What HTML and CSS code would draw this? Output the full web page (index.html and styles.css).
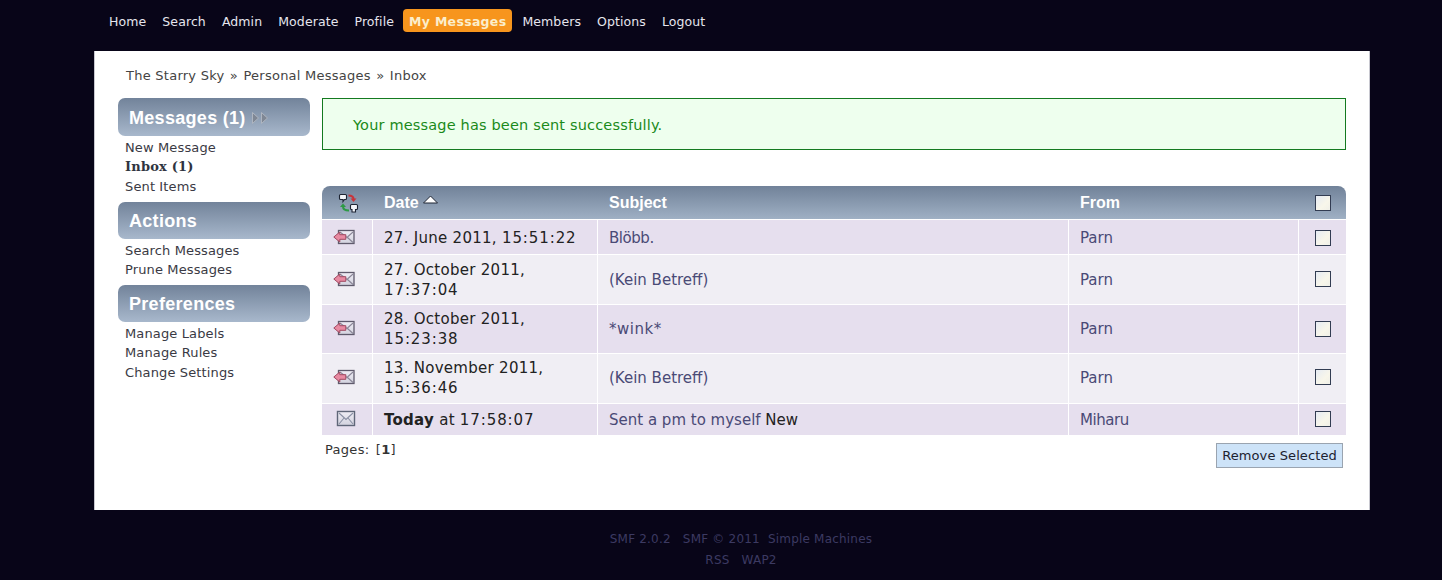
FILE: index.html
```html
<!DOCTYPE html>
<html lang="en">
<head>
<meta charset="utf-8">
<title>Personal Messages - Inbox</title>
<link rel="stylesheet" href="styles.css">
</head>
<body>
<nav class="topnav">
  <a>Home</a><a>Search</a><a>Admin</a><a>Moderate</a><a>Profile</a><a class="active">My Messages</a><a>Members</a><a>Options</a><a>Logout</a>
</nav>
<main class="wrapper">
  <div class="crumbs"><a>The Starry Sky</a> <span class="sep">»</span> <a>Personal Messages</a> <span class="sep">»</span> <a>Inbox</a></div>
  <div class="columns">
    <aside class="side">
      <h3 class="sidehead sidehead-first">Messages (1) <svg class="arrows" width="18" height="14" viewBox="0 0 18 14"><path d="M1.500 1.500l6 5.500-6 5.500z M10.500 1.500l6 5.500-6 5.500z" fill="#7f8794" stroke="#aeb5c0"/></svg></h3>
      <ul class="sidelist">
        <li>New Message</li>
        <li class="current">Inbox (1)</li>
        <li>Sent Items</li>
      </ul>
      <h3 class="sidehead">Actions</h3>
      <ul class="sidelist">
        <li>Search Messages</li>
        <li>Prune Messages</li>
      </ul>
      <h3 class="sidehead">Preferences</h3>
      <ul class="sidelist">
        <li>Manage Labels</li>
        <li>Manage Rules</li>
        <li>Change Settings</li>
      </ul>
    </aside>
    <section class="content">
      <div class="notice">Your message has been sent successfully.</div>
      <table class="inbox">
        <colgroup><col class="c1"><col class="c2"><col class="c3"><col class="c4"><col class="c5"></colgroup>
        <thead>
          <tr>
            <th class="ic"><svg class="swap" width="21" height="21" viewBox="0 0 21 21"><path d="M1.500 2.500a1 1 0 0 1 1-1h5a1 1 0 0 1 1 1v3a1 1 0 0 1-1 1h-1l-1.500 2v-2h-2.500a1 1 0 0 1-1-1z" fill="#f4f6fa" stroke="#1d2433" stroke-width="1.100"/><path d="M12.500 12.500a1 1 0 0 1 1-1h5a1 1 0 0 1 1 1v3a1 1 0 0 1-1 1h-1v2.500h-3.500v-2.500h-.500a1 1 0 0 1-1-1z" fill="#f4f6fa" stroke="#1d2433" stroke-width="1.100"/><path d="M10.500 2.500c3 0 5 .5 5 3.500" fill="none" stroke="#c8333a" stroke-width="2"/><path d="M12.500 5.500h6l-3 3.500z" fill="#c8333a"/><path d="M11 17.500c-3 0-6-.5-6-4" fill="none" stroke="#2d9a45" stroke-width="2"/><path d="M2 14h6l-3-3.500z" fill="#2d9a45"/></svg></th>
            <th>Date <svg class="sort" width="17" height="10" viewBox="0 0 17 10"><path d="M8.500 1l7 7h-14z" fill="#fff" stroke="#1d2433"/></svg></th>
            <th>Subject</th>
            <th>From</th>
            <th class="ck"><span class="box"></span></th>
          </tr>
        </thead>
        <tbody>
          <tr class="odd r1"><td class="ic"><svg class="mail" width="22" height="16" viewBox="0 0 22 16"><use href="#replied"/></svg></td><td class="date">27. June 2011, <span class="time">15:51:22</span></td><td class="link tight">Blöbb.</td><td class="link">Parn</td><td class="ck"><span class="box"></span></td></tr>
          <tr class="even r2"><td class="ic"><svg class="mail" width="22" height="16" viewBox="0 0 22 16"><use href="#replied"/></svg></td><td class="date">27. October 2011,<br><span class="time">17:37:04</span></td><td class="link">(Kein Betreff)</td><td class="link">Parn</td><td class="ck"><span class="box"></span></td></tr>
          <tr class="odd r3"><td class="ic"><svg class="mail" width="22" height="16" viewBox="0 0 22 16"><use href="#replied"/></svg></td><td class="date">28. October 2011,<br><span class="time">15:23:38</span></td><td class="link wide">*wink*</td><td class="link">Parn</td><td class="ck"><span class="box"></span></td></tr>
          <tr class="even r4"><td class="ic"><svg class="mail" width="22" height="16" viewBox="0 0 22 16"><use href="#replied"/></svg></td><td class="date">13. November 2011,<br><span class="time">15:36:46</span></td><td class="link">(Kein Betreff)</td><td class="link">Parn</td><td class="ck"><span class="box"></span></td></tr>
          <tr class="odd r5"><td class="ic"><svg class="mail plain" width="20" height="17" viewBox="0 0 20 17"><use href="#plain"/></svg></td><td class="date"><b>Today</b> at <span class="time">17:58:07</span></td><td class="link">Sent a pm to myself <span class="new">New</span></td><td class="link tight">Miharu</td><td class="ck"><span class="box"></span></td></tr>
        </tbody>
      </table>
      <div class="under">
        <div class="pages">Pages: [<b>1</b>]</div>
        <button class="remove" type="button">Remove Selected</button>
      </div>
    </section>
  </div>
</main>
<footer class="foot">
  <div>SMF 2.0.2 &nbsp; SMF © 2011 &nbsp;Simple Machines</div>
  <div>RSS &nbsp; WAP2</div>
</footer>
<svg class="defs" width="0" height="0"><defs>
  <linearGradient id="env" x1="0" y1="0" x2="0" y2="1"><stop offset="0" stop-color="#f0eef5"/><stop offset="1" stop-color="#d2d2de"/></linearGradient>
  <g id="replied"><rect x="5.500" y="1.500" width="15.500" height="13" fill="url(#env)" stroke="#5f5a6c" stroke-width="1.300"/><path d="M7 3l7 5.500L20 3M20 13.500l-5.500-5" fill="none" stroke="#8a8698" stroke-width="1.100"/><path d="M.8 8l6-5v2.700h6v4.600h-6V13z" fill="#e88aa2" stroke="#a04860"/></g>
  <g id="plain"><rect x="1.500" y="1.500" width="17" height="14" fill="url(#env)" stroke="#5f6678" stroke-width="1.400"/><path d="M3 3l7 6.500L17 3M3 14l5-6M17 14l-5-6" fill="none" stroke="#8a90a4" stroke-width="1.100"/></g>
</defs></svg>
</body>
</html>
```
FILE: styles.css
```css
* { box-sizing: border-box; }
html, body { margin: 0; padding: 0; }
body {
  background: #080518;
  font-family: "DejaVu Sans", Verdana, sans-serif;
  font-size: 13px;
  color: #333;
  height: 580px;
  overflow: hidden;
}
.topnav {
  height: 51px;
  padding: 9px 0 0 101px;
  display: flex;
  align-items: flex-start;
  font-size: 12.500px;
  letter-spacing: .1px;
  color: #e6e6ee;
}
.topnav a { padding: 1px 8px 0; line-height: 23px; }
.topnav a.active {
  background: #f7951d;
  color: #fbeecb;
  font-weight: bold;
  letter-spacing: .3px;
  border-radius: 4px;
  padding: 1px 6px 0;
  margin: 0 2px 0 1px;
  height: 23px;
  line-height: 23px;
}
.wrapper {
  margin: 0 72px 0 94px;
  height: 459px;
  background: #fff;
  border-left: 1px solid #c8c8d0;
  border-right: 1px solid #c8c8d0;
  padding: 0 23px 0 23px;
}
.crumbs { height: 47px; padding: 16px 0 0 8px; line-height: 18px; letter-spacing: .25px; color: #444; }
.sep { padding: 0 1px; }
.columns { display: flex; gap: 12px; align-items: flex-start; }
.side { width: 192px; flex: none; }
.sidehead {
  margin: 0;
  height: 37px;
  padding: 1px 0 0 11px;
  font: bold 18px/36px "Liberation Sans", Arial, sans-serif;
  letter-spacing: .3px;
  color: #fff;
  background: linear-gradient(#72839a, #a8b8cc);
  border-radius: 7px;
  display: flex;
  align-items: center;
  gap: 5px;
}
.sidehead-first { height: 38px; }
.sidelist { list-style: none; margin: 0; padding: 2px 0 5px 7px; line-height: 19.500px; letter-spacing: .13px; color: #3a3a44; }
.sidelist .current { font-family: "DejaVu Serif", serif; font-weight: bold; color: #2f3440; letter-spacing: .2px; margin: -1px 0 1px; }
.content { width: 1024px; flex: none; }
.notice {
  height: 52px;
  border: 1px solid #147a20;
  background: #eeffee;
  color: #1a8a1a;
  font-size: 14.500px;
  letter-spacing: .17px;
  line-height: 52px;
  padding-left: 30px;
}
.inbox {
  margin-top: 36px;
  width: 1024px;
  table-layout: fixed;
  border-collapse: separate;
  border-spacing: 0;
  font-size: 15px;
  color: #222;
}
.c1 { width: 51px; } .c2 { width: 225px; } .c3 { width: 471px; } .c4 { width: 230px; } .c5 { width: 47px; }
.inbox th {
  height: 33px;
  text-align: left;
  padding: 0 0 0 11px;
  font: bold 16px "Liberation Sans", Arial, sans-serif;
  color: #fff;
  background: linear-gradient(#718299, #9fb0c4);
}
.inbox th:first-child { border-top-left-radius: 8px; padding: 0; text-align: center; }
.inbox th:last-child { border-top-right-radius: 8px; }
.inbox td { padding: 0 0 0 11px; border-top: 1px solid #fff; border-right: 1px solid #fff; line-height: 20px; }
.inbox td:last-child { border-right: 0; }
.inbox .ic { padding: 0 6px 2px 0; text-align: center; }
.inbox th.ic { padding: 0; }
.inbox .ck { padding: 0 0 2px; text-align: center; }
.inbox th.ck { padding: 0 0 0 1px; }
.inbox svg { vertical-align: middle; }
.inbox .mail { display: block; margin: 0 0 0 11px; }
.inbox .plain { margin-left: 14px; }
.inbox .swap { display: block; margin: 1px 0 0 16px; }
.sort { margin-top: -6px; margin-left: -1px; }
.date { letter-spacing: .28px; }
.time { letter-spacing: .9px; }
.wide { letter-spacing: .5px; }
.odd td { background: #e6dfee; }
.even td { background: #f0eef4; }
.inbox .r1 td { height: 35px; padding-top: 1px; }
.inbox .r1 .ic, .inbox .r1 .ck { padding-bottom: 1px; }
.r2 td { height: 50px; }
.r3 td { height: 49px; }
.r4 td { height: 50px; padding-bottom: 2px; }
.inbox .r4 .ic, .inbox .r4 .ck { padding-bottom: 4px; }
.r5 td { height: 32px; }
.inbox .r5 .ic, .inbox .r5 .ck { padding-bottom: 3px; }
.inbox .link { color: #4a4a76; }
.inbox .tight { letter-spacing: -.45px; }
.new { color: #222; }
.box {
  display: inline-block;
  width: 16px;
  height: 16px;
  vertical-align: middle;
  border: 1px solid #323c52;
  background: linear-gradient(135deg, #e6ebf4, #f8f6ea 60%, #f0f0e8);
}
.under { display: flex; justify-content: space-between; align-items: flex-start; padding: 6px 3px 0; }
.pages { letter-spacing: .3px; word-spacing: 2px; line-height: 18px; color: #333; }
.remove {
  margin-top: 2px;
  height: 25px;
  width: 127px;
  padding: 0;
  border: 1px solid #9aa4b0;
  background: #cde3f8;
  font: 13px "DejaVu Sans", Verdana, sans-serif;
  letter-spacing: .1px;
  color: #1c2230;
}
.foot { text-align: center; padding: 19px 0 0 40px; font-size: 12px; color: #3c3a62; line-height: 21px; letter-spacing: .2px; }
.defs { position: absolute; }
```
